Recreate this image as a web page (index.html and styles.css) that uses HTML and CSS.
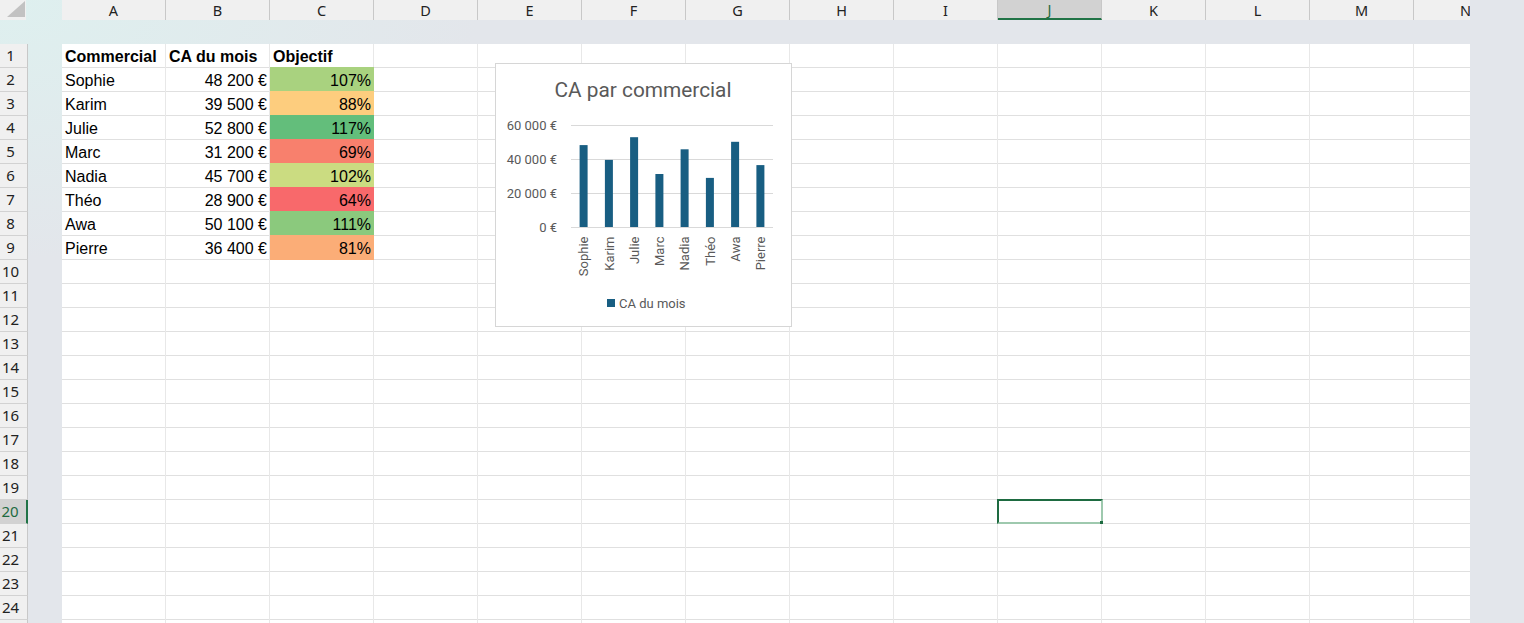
FILE: index.html
```html
<!DOCTYPE html>
<html lang="fr">
<head>
  <meta charset="UTF-8" />
  <meta name="viewport" content="width=device-width, initial-scale=1.0"/>
  <title>Classeur - CA par commercial</title>
  <link rel="stylesheet" href="styles.css">
</head>
<body>
  <div class="app">
    <div class="top">
      <div class="corner">
        <svg width="26" height="20" viewBox="0 0 26 20"><polygon points="7,17 25,17 25,1" fill="#c2c2c2"/></svg>
      </div>
      <div class="colheads">
        <div class="ch">A</div>
        <div class="ch">B</div>
        <div class="ch">C</div>
        <div class="ch">D</div>
        <div class="ch">E</div>
        <div class="ch">F</div>
        <div class="ch">G</div>
        <div class="ch">H</div>
        <div class="ch">I</div>
        <div class="ch active">J</div>
        <div class="ch">K</div>
        <div class="ch">L</div>
        <div class="ch">M</div>
        <div class="ch">N</div>
      </div>
    </div>

    <div class="body">
      <div class="rowheads">
        <div class="rh">1</div>
        <div class="rh">2</div>
        <div class="rh">3</div>
        <div class="rh">4</div>
        <div class="rh">5</div>
        <div class="rh">6</div>
        <div class="rh">7</div>
        <div class="rh">8</div>
        <div class="rh">9</div>
        <div class="rh">10</div>
        <div class="rh">11</div>
        <div class="rh">12</div>
        <div class="rh">13</div>
        <div class="rh">14</div>
        <div class="rh">15</div>
        <div class="rh">16</div>
        <div class="rh">17</div>
        <div class="rh">18</div>
        <div class="rh">19</div>
        <div class="rh active">20</div>
        <div class="rh">21</div>
        <div class="rh">22</div>
        <div class="rh">23</div>
        <div class="rh">24</div>
        <div class="rh"></div>
      </div>

      <div class="sheet">
        <div class="table">
          <div class="cell bold">Commercial</div>
          <div class="cell bold">CA du mois</div>
          <div class="cell bold">Objectif</div>

          <div class="cell">Sophie</div>
          <div class="cell num">48 200 €</div>
          <div class="cell num fill" style="background:#a9d27f">107%</div>

          <div class="cell">Karim</div>
          <div class="cell num">39 500 €</div>
          <div class="cell num fill" style="background:#fdcd7e">88%</div>

          <div class="cell">Julie</div>
          <div class="cell num">52 800 €</div>
          <div class="cell num fill" style="background:#63be7b">117%</div>

          <div class="cell">Marc</div>
          <div class="cell num">31 200 €</div>
          <div class="cell num fill" style="background:#f8806d">69%</div>

          <div class="cell">Nadia</div>
          <div class="cell num">45 700 €</div>
          <div class="cell num fill" style="background:#cbdc81">102%</div>

          <div class="cell">Théo</div>
          <div class="cell num">28 900 €</div>
          <div class="cell num fill" style="background:#f8696b">64%</div>

          <div class="cell">Awa</div>
          <div class="cell num">50 100 €</div>
          <div class="cell num fill" style="background:#8bc97d">111%</div>

          <div class="cell">Pierre</div>
          <div class="cell num">36 400 €</div>
          <div class="cell num fill" style="background:#fbad77">81%</div>
        </div>

        <!-- chart floats over the cells -->
        <div class="chart">
          <svg width="295" height="262" viewBox="0 0 295 262">
            <text class="title" x="147" y="33" text-anchor="middle">CA par commercial</text>

            <g class="gridlines">
              <line x1="75" y1="61.5" x2="277" y2="61.5"/>
              <line x1="75" y1="95.5" x2="277" y2="95.5"/>
              <line x1="75" y1="129.5" x2="277" y2="129.5"/>
              <line x1="75" y1="163.5" x2="277" y2="163.5"/>
            </g>

            <g class="ylabels" text-anchor="end">
              <text x="61" y="66">60 000 €</text>
              <text x="61" y="100">40 000 €</text>
              <text x="61" y="134">20 000 €</text>
              <text x="61" y="168">0 €</text>
            </g>

            <g class="bars">
              <rect x="83.6" y="81.1" width="8" height="81.9"/>
              <rect x="108.9" y="95.9" width="8" height="67.1"/>
              <rect x="134.1" y="73.2" width="8" height="89.8"/>
              <rect x="159.4" y="110" width="8" height="53"/>
              <rect x="184.6" y="85.3" width="8" height="77.7"/>
              <rect x="209.9" y="113.9" width="8" height="49.1"/>
              <rect x="235.1" y="77.8" width="8" height="85.2"/>
              <rect x="260.4" y="101.1" width="8" height="61.9"/>
            </g>

            <g class="xlabels" text-anchor="end">
              <text transform="translate(92.3,172.5) rotate(-90)">Sophie</text>
              <text transform="translate(117.6,172.5) rotate(-90)">Karim</text>
              <text transform="translate(142.8,172.5) rotate(-90)">Julie</text>
              <text transform="translate(168.1,172.5) rotate(-90)">Marc</text>
              <text transform="translate(193.3,172.5) rotate(-90)">Nadia</text>
              <text transform="translate(218.6,172.5) rotate(-90)">Théo</text>
              <text transform="translate(243.8,172.5) rotate(-90)">Awa</text>
              <text transform="translate(269.1,172.5) rotate(-90)">Pierre</text>
            </g>

            <rect class="swatch" x="111" y="235" width="8" height="8"/>
            <text class="legend" x="123" y="243.5">CA du mois</text>
          </svg>
        </div>

        <div class="selection"></div>
      </div>
    </div>
  </div>
</body>
</html>
```

FILE: styles.css
```css
body {
  margin: 0;
  background: #e3e5e9;
  font-family: 'Noto Sans', 'Liberation Sans', sans-serif;
  color: #222;
}
.app {
  height: 623px;
  overflow: hidden;
  background: radial-gradient(ellipse 480px 260px at 0 0, #def0ef 0, #e3e6eb 100%);
}
.top {
  display: flex;
  height: 20px;
  margin-bottom: 24px;
}
.corner {
  width: 62px;
  flex: 0 0 62px;
}
.corner svg {
  display: block;
  background: #f0f0f0;
}
.colheads {
  display: flex;
  width: 1408px;
  overflow: hidden;
  background: #f0f0f0;
}
.ch {
  flex: 0 0 104px;
  box-sizing: border-box;
  border-right: 1px solid #c8c8c8;
  text-align: center;
  font-size: 14.5px;
  line-height: 20px;
  color: #222;
}
.ch.active {
  background: #d2d2d2;
  border-bottom: 2px solid #217346;
  color: #1e6b41;
  line-height: 19px;
}
.body {
  display: flex;
  height: 579px;
}
.rowheads {
  width: 28px;
  flex: 0 0 28px;
  overflow: hidden;
}
.rh {
  height: 24px;
  box-sizing: border-box;
  border-bottom: 1px solid #d2d2d2;
  border-right: 1px solid #c8c8c8;
  background: #f0f0f0;
  padding-right: 6px;
  text-align: center;
  font-size: 15px;
  line-height: 23px;
  color: #222;
}
.rh.active {
  background: #d2d2d2;
  border-right: 2px solid #217346;
  color: #1e6b41;
}
.sheet {
  position: relative;
  width: 1408px;
  margin-left: 34px;
  overflow: hidden;
  background-color: #fff;
  background-image:
    linear-gradient(to right, transparent 103px, #e8e8e8 103px),
    linear-gradient(to bottom, transparent 23px, #e0e0e0 23px);
  background-size: 104px 100%, 100% 24px;
}
.table {
  display: grid;
  grid-template-columns: repeat(3, 104px);
  grid-auto-rows: 24px;
  font-family: 'Liberation Sans', Arial, sans-serif;
  font-size: 16px;
  color: #000;
}
.cell {
  padding: 1px 3px 0 3px;
  line-height: 23px;
  white-space: nowrap;
  overflow: hidden;
}
.cell.bold {
  font-weight: bold;
}
.cell.num {
  text-align: right;
  padding-right: 3px;
}
.cell.fill {
  margin-top: -1px;
  line-height: 25px;
}
.chart {
  position: absolute;
  left: 433px;
  top: 19px;
  width: 297px;
  height: 264px;
  box-sizing: border-box;
  border: 1px solid #d6d6d6;
  background: #fff;
}
.chart svg {
  display: block;
  font-family: Roboto, 'Liberation Sans', sans-serif;
}
.chart .title {
  font-size: 20.8px;
  fill: #595959;
}
.chart .gridlines line {
  stroke: #d9d9d9;
  stroke-width: 1;
}
.chart .ylabels text,
.chart .xlabels text,
.chart .legend {
  font-size: 13px;
  fill: #595959;
}
.chart .bars rect,
.chart .swatch {
  fill: #185e82;
}
.selection {
  position: absolute;
  left: 935px;
  top: 455px;
  width: 106px;
  height: 25px;
  box-sizing: border-box;
  border: 2px solid #1e6b41;
  border-right-color: #9ec9ae;
  border-bottom-color: #9ec9ae;
}
.selection::after {
  content: "";
  position: absolute;
  right: -2px;
  bottom: -2px;
  width: 3px;
  height: 3px;
  background: #1e6b41;
}
```
